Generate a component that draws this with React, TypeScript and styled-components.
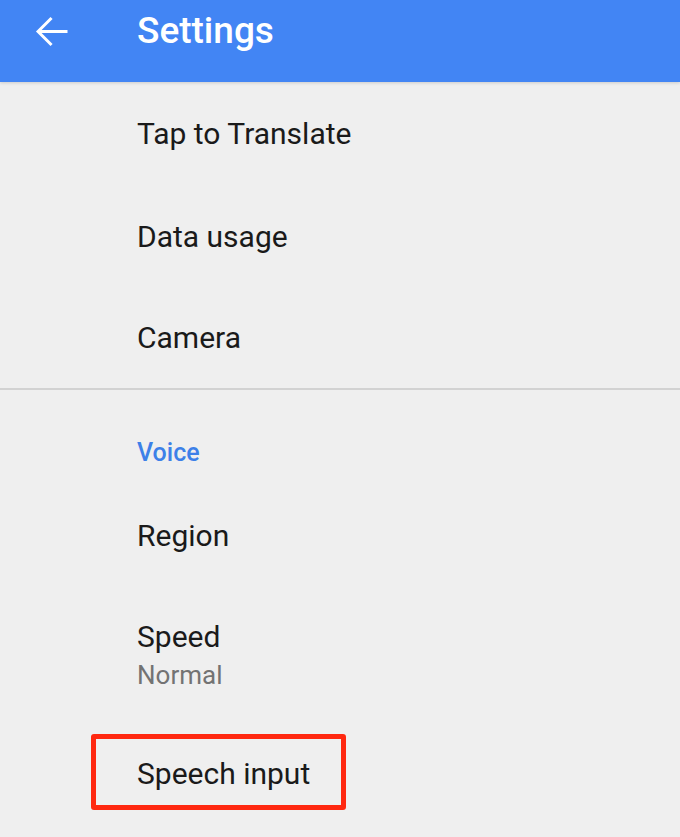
import styled, { createGlobalStyle } from "styled-components";

const GlobalStyle = createGlobalStyle`
  html, body {
    margin: 0;
    padding: 0;
    background: #efefef;
  }
  body {
    font-family: Roboto, "Noto Sans", "Liberation Sans", sans-serif;
  }
`;

const Page = styled.div`
  width: 680px;
  height: 837px;
  overflow: hidden;
  background: #efefef;
  display: flex;
  flex-direction: column;
`;

const Toolbar = styled.div`
  height: 82px;
  flex-shrink: 0;
  background: #4285f4;
  display: flex;
  align-items: flex-start;
  box-shadow: 0 1px 3px rgba(0, 0, 0, 0.15);
  position: relative;
  z-index: 1;
`;

const BackBtn = styled.div`
  width: 137px;
  height: 62px;
  display: flex;
  align-items: center;
  padding-left: 30px;
  box-sizing: border-box;
`;

const Title = styled.div`
  color: #fff;
  font-size: 37px;
  font-weight: 500;
  line-height: 62px;
`;

const List = styled.div`
  display: flex;
  flex-direction: column;
`;

const Item = styled.div<{ $h: number }>`
  height: ${({ $h }) => $h}px;
  display: flex;
  flex-direction: column;
  justify-content: center;
  padding-left: 137px;
`;

const Label = styled.div`
  font-size: 30px;
  color: #1a1a1a;
  line-height: 38px;
`;

const Sub = styled.div`
  font-size: 26px;
  color: #737373;
  line-height: 38px;
`;

const Header = styled.div`
  height: 96px;
  box-sizing: border-box;
  padding: 28px 0 0 137px;
  display: flex;
  align-items: center;
  color: #3d80e8;
  font-size: 25px;
  font-weight: 500;
`;

const Divider = styled.div`
  height: 2px;
  background: #d2d2d2;
`;

const Highlight = styled.div`
  margin: 8px 0 0 91px;
  width: 255px;
  height: 76px;
  border: 5px solid #ff2810;
  border-radius: 3px;
  box-sizing: border-box;
  display: flex;
  align-items: center;
  padding: 4px 0 0 41px;
`;

const Arrow = () => (
  <svg width="45" height="45" viewBox="0 0 24 24">
    <path
      d="M20 12H4.6M11.5 4.8L4.3 12l7.2 7.2"
      fill="none"
      stroke="#fff"
      strokeWidth="1.6"
    />
  </svg>
);

const App = () => {
  return (
    <Page>
      <GlobalStyle />
      <Toolbar>
        <BackBtn>
          <Arrow />
        </BackBtn>
        <Title>Settings</Title>
      </Toolbar>
      <List>
        <Item $h={104}>
          <Label>Tap to Translate</Label>
        </Item>
        <Item $h={102}>
          <Label>Data usage</Label>
        </Item>
        <Item $h={100}>
          <Label>Camera</Label>
        </Item>
        <Divider />
        <Header>Voice</Header>
        <Item $h={100}>
          <Label>Region</Label>
        </Item>
        <Item $h={140}>
          <Label>Speed</Label>
          <Sub>Normal</Sub>
        </Item>
        <Highlight>
          <Label>Speech input</Label>
        </Highlight>
      </List>
    </Page>
  );
};

export default App;
